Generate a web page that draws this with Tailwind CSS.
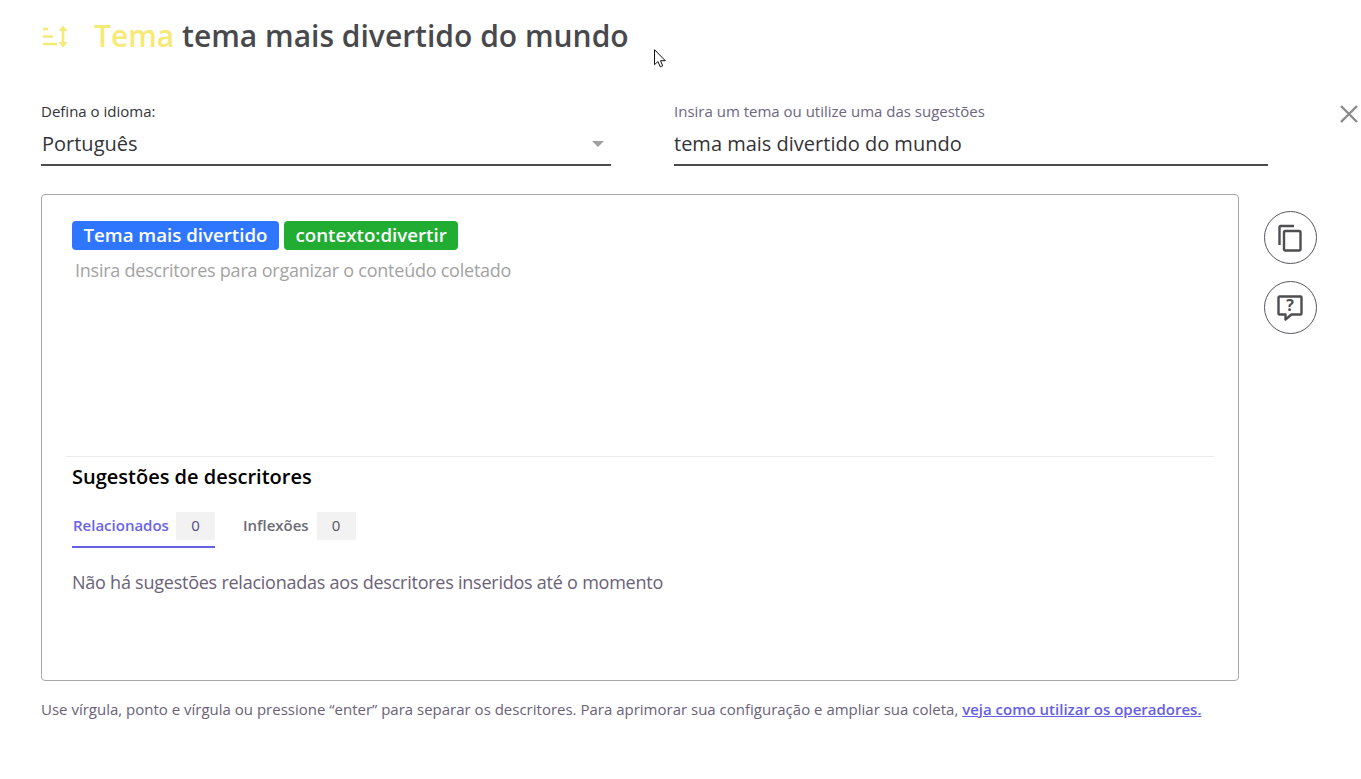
<!DOCTYPE html>
<html lang="pt-BR">
<head>
    <meta charset="UTF-8">
    <meta name="viewport" content="width=device-width, initial-scale=1.0">
    <script src="https://cdn.jsdelivr.net/npm/@tailwindcss/browser@4"></script>
    <title>Tema</title>
</head>
<body class="bg-white font-['Open_Sans',sans-serif] overflow-hidden">
    <div class="relative h-[779px] w-[1361px] pl-[41px]">
        <!-- Title -->
        <div class="flex items-center h-[72px] pr-4">
            <svg class="w-[28px] h-[24px] ml-[1px]" viewBox="0 0 28 24" fill="none" stroke="#f5ea76" stroke-width="2.600">
                <path d="M1 5h5M1 12.500h10M1 20h14"/>
                <path d="M21 4v16"/>
                <path d="M16.500 7l4.500-5.500 4.500 5.500z M16.500 18l4.500 5.500 4.500-5.500z" fill="#f5ea76" stroke="none"/>
            </svg>
            <h1 class="ml-[24px] text-[30px] font-semibold text-[#48484d] leading-none"><span class="text-[#f5ea76]">Tema</span> tema mais divertido do mundo</h1>
        </div>

        <!-- Fields -->
        <div class="flex mt-[28px]">
            <div class="w-[570px]">
                <label class="block text-[15px] leading-[22px] text-[#333338]">Defina o idioma:</label>
                <div class="flex items-center justify-between h-[44px] pt-[2px] pl-[1px] border-b-2 border-[#4c4c4c] text-[20px] text-[#333338]">
                    <span>Português</span>
                    <span class="mr-[7px] w-0 h-0 border-x-[6px] border-x-transparent border-t-[6px] border-t-[#a0a0a0]"></span>
                </div>
            </div>
            <div class="w-[594px] ml-[63px]">
                <label class="block text-[15px] leading-[22px] text-[#6d6580]">Insira um tema ou utilize uma das sugestões</label>
                <div class="flex items-center h-[44px] pt-[2px] border-b-2 border-[#4c4c4c] text-[20px] text-[#333338]">tema mais divertido do mundo</div>
            </div>
        </div>

        <!-- Close -->
        <svg class="absolute left-[1340px] top-[105px] w-[18px] h-[18px]" viewBox="0 0 18 18" fill="none" stroke="#8a8a8a" stroke-width="2.400">
            <path d="M1 1l16 16M17 1L1 17"/>
        </svg>

        <!-- Card and side buttons -->
        <div class="flex mt-[28px]">
            <div class="w-[1198px] h-[487px] border border-[#a8a8a8] rounded-[4px] flex flex-col pt-[26px] px-[24px]">
                <div class="flex gap-[5px] pl-[6px]">
                    <span class="h-[29px] px-[11.500px] flex items-center rounded-[4px] bg-[#2f76ff] text-white text-[18.700px] font-semibold">Tema mais divertido</span>
                    <span class="h-[29px] px-[11.500px] flex items-center rounded-[4px] bg-[#20ad32] text-white text-[18.700px] font-semibold">contexto:divertir</span>
                </div>
                <p class="mt-[7px] pl-[9px] text-[18px] leading-[26px] tracking-[-0.24px] text-[#a3a3a3]">Insira descritores para organizar o conteúdo coletado</p>
                <div class="mt-[173px] border-t border-[#ececec] pl-[6px]">
                    <h2 class="mt-[6px] text-[20px] leading-[28px] font-semibold text-black">Sugestões de descritores</h2>
                    <div class="flex mt-[16px]">
                        <div class="flex items-center gap-[7px] h-[36px] box-content pb-[3px] pl-[1px] border-b-2 border-[#6560e6] text-[15px] font-semibold text-[#6a64ea]">
                            <span>Relacionados</span>
                            <span class="w-[39px] h-[28px] mt-[1px] flex items-center justify-center bg-[#f2f2f2] text-[#4f4a86] font-normal">0</span>
                        </div>
                        <div class="flex items-center gap-[8px] h-[36px] ml-[28px] text-[15px] font-semibold text-[#6b6b75]">
                            <span>Inflexões</span>
                            <span class="w-[39px] h-[28px] mt-[1px] flex items-center justify-center bg-[#f2f2f2] text-[#55555c] font-normal">0</span>
                        </div>
                    </div>
                    <p class="mt-[21px] text-[18px] leading-[26px] tracking-[-0.24px] text-[#6b6178]">Não há sugestões relacionadas aos descritores inseridos até o momento</p>
                </div>
            </div>
            <div class="flex flex-col gap-[17px] ml-[25px] mt-[17px]">
                <button class="w-[53px] h-[53px] rounded-full border border-[#55555c] flex items-center justify-center">
                    <svg class="w-[26px] h-[28px] -ml-[2px]" viewBox="0 0 26 28" fill="none" stroke="#4d4d52" stroke-width="2.400">
                        <path d="M17 2H3.500a1 1 0 0 0-1 1v18"/>
                        <rect x="7" y="7" width="16.500" height="19.500" rx="1.500"/>
                    </svg>
                </button>
                <button class="w-[53px] h-[53px] rounded-full border border-[#55555c] flex items-center justify-center">
                    <svg class="w-[26px] h-[26px] -ml-[1px] mt-[1px]" viewBox="0 0 26 26" fill="none">
                        <path d="M2.500 1.500h21a1 1 0 0 1 1 1v16a1 1 0 0 1-1 1H14.500l-6 5v-5H2.500a1 1 0 0 1-1-1v-16a1 1 0 0 1 1-1z" stroke="#4d4d52" stroke-width="2.400" stroke-linejoin="round"/>
                        <text x="13" y="16" text-anchor="middle" font-family="Open Sans" font-weight="700" font-size="16" fill="#4d4d52">?</text>
                    </svg>
                </button>
            </div>
        </div>

        <p class="mt-[18px] text-[15px] leading-[20px] text-[#6b6178]">Use vírgula, ponto e vírgula ou pressione “enter” para separar os descritores. Para aprimorar sua configuração e ampliar sua coleta, <a href="#" class="font-semibold underline text-[#6560e6]">veja como utilizar os operadores.</a></p>

        <!-- Mouse pointer -->
        <svg class="absolute left-[654px] top-[49px] w-[14px] h-[20px]" viewBox="0 0 14 20" fill="#fff" stroke="#111" stroke-width="1">
            <path d="M0.500 0.700v15l3.500-3.200 2.200 5.300 2.500-1-2.200-5.100h4.800z"/>
        </svg>
    </div>
</body>
</html>
